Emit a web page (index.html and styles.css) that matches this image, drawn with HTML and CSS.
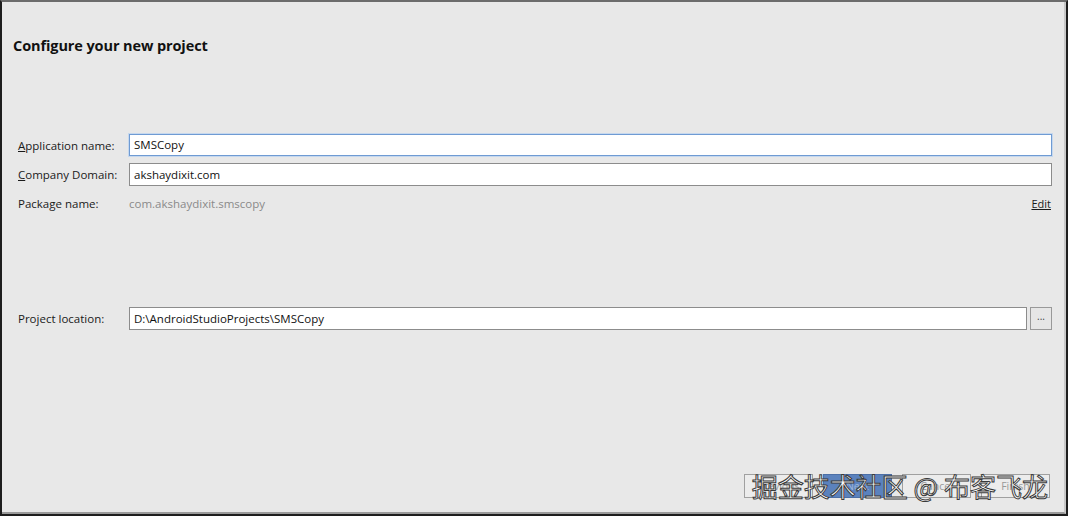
FILE: index.html
```html
<!DOCTYPE html>
<html>
<head>
<meta charset="utf-8">
<link rel="stylesheet" href="styles.css">
</head>
<body>
<div class="window">
  <div class="inner">
    <h1 class="title">Configure your new project</h1>
    <div class="form">
      <div class="row first">
        <label class="label"><u>A</u>pplication name:</label>
        <div class="field focus">SMSCopy</div>
      </div>
      <div class="row">
        <label class="label"><u>C</u>ompany Domain:</label>
        <div class="field">akshaydixit.com</div>
      </div>
      <div class="row pkg">
        <span class="label">Package name:</span>
        <span class="pkg-value">com.akshaydixit.smscopy</span>
        <a class="edit">Edit</a>
      </div>
      <div class="row loc">
        <span class="label">Project location:</span>
        <div class="field grow">D:\AndroidStudioProjects\SMSCopy</div>
        <div class="browse">...</div>
      </div>
    </div>
    <div class="buttons">
      <div class="btn">Previous</div>
      <div class="btn primary">Next</div>
      <div class="btn">Cancel</div>
      <div class="btn">Finish</div>
      <div class="watermark">掘金技术社区 @ 布客飞龙</div>
    </div>
  </div>
</div>
</body>
</html>
```
FILE: styles.css
```css
* { box-sizing: border-box; }
html, body { margin: 0; padding: 0; }
body {
  width: 1068px;
  height: 516px;
  overflow: hidden;
  font-family: "Open Sans", "Noto Sans", sans-serif;
  background: #e8e8e8;
}
.window {
  width: 1068px;
  height: 516px;
  border-top: 2px solid #6c6c6c;
  border-left: 2px solid #1e1e1e;
  border-right: 2px solid #1e1e1e;
  border-bottom: 2px solid #1e1e1e;
  background: #e8e8e8;
}
.inner {
  height: 100%;
  border-right: 2px solid #c8c8c8;
  border-bottom: 2px solid #9a9a9a;
  display: flex;
  flex-direction: column;
  position: relative;
}
.title {
  margin: 34px 0 0 11px;
  font-size: 14.5px;
  font-weight: 700;
  color: #111;
  line-height: 20px;
  letter-spacing: -0.1px;
}
.form {
  margin-top: 78px;
  padding: 0 12px 0 16px;
  display: flex;
  flex-direction: column;
}
.row {
  display: flex;
  align-items: center;
  height: 23px;
  margin-bottom: 6px;
}
.row.first { height: 22px; margin-bottom: 7px; }
.label {
  width: 111px;
  flex: none;
  font-size: 11.5px;
  color: #1a1a1a;
  white-space: nowrap;
}
.label u { text-decoration: underline; text-underline-offset: 1px; }
.field {
  flex: 1;
  height: 23px;
  background: #fff;
  border: 1px solid #8c8c8c;
  font-size: 11.5px;
  color: #111;
  line-height: 21px;
  padding-left: 4px;
}
.field.focus {
  height: 22px;
  border: 1px solid #6f9bd3;
  box-shadow: 0 0 0 1px #c6d8ee;
  line-height: 20px;
}
.pkg { height: 22px; margin-bottom: 0; }
.pkg-value {
  flex: 1;
  font-size: 11.5px;
  color: #8a8a8a;
}
.edit {
  font-size: 11px;
  color: #1a1a1a;
  text-decoration: underline;
  margin-right: 1px;
}
.loc { margin-top: 93px; }
.browse {
  width: 22px;
  height: 23px;
  margin-left: 3px;
  border: 1px solid #999;
  background: #e6e6e6;
  font-size: 10px;
  color: #444;
  text-align: center;
  line-height: 17px;
}
.buttons {
  margin-top: auto;
  margin-bottom: 14px;
  padding-right: 14px;
  display: flex;
  justify-content: flex-end;
  gap: 10px;
  position: relative;
}
.btn {
  width: 69px;
  height: 24px;
  border: 1px solid #a0a0a0;
  background: #ececec;
  font-size: 10.5px;
  color: #999;
  text-align: center;
  line-height: 22px;
}
.btn.primary {
  background: #5b82bd;
  border-color: #4c6fa6;
  color: #9fb6d8;
}
.watermark {
  position: absolute;
  right: 16px;
  top: -5px;
  font-family: "Noto Sans CJK SC", sans-serif;
  font-size: 26px;
  line-height: 34px;
  color: #fff;
  letter-spacing: 0;
  -webkit-text-stroke: 1px #3a3a3a;
  white-space: nowrap;
}
```
